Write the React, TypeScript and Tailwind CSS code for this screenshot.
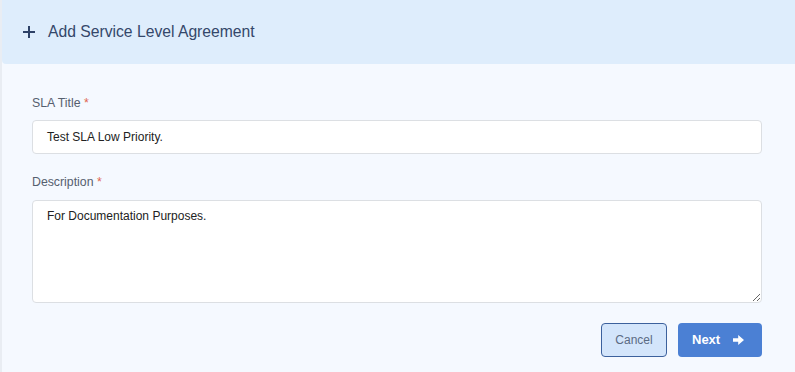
import React from "react";

export default function App() {
  const font = { fontFamily: "'Liberation Sans', Arial, sans-serif" };
  return (
    <div
      className="w-[795px] h-[372px] bg-[#f5f9ff] border-l-2 border-[#e9edf3] flex flex-col overflow-hidden"
      style={font}
    >
      <div className="h-[64px] shrink-0 bg-[#deedfc] rounded-bl-[4px] flex items-center pl-[20px]">
        <svg width="14" height="14" viewBox="0 0 14 14" className="mr-[12px]">
          <path d="M7 1v12M1 7h12" stroke="#2d4167" strokeWidth="2" />
        </svg>
        <span className="text-[15.7px] text-[#34476a]">Add Service Level Agreement</span>
      </div>
      <div className="flex flex-col pl-[30px] pr-[33px] pt-[31px]">
        <label className="text-[12.3px] text-[#55606f] leading-[16px]">
          SLA Title <span className="text-[#e0664f]">*</span>
        </label>
        <div className="mt-[9px] h-[34px] bg-white border border-[#dcdfe3] rounded-[4px] flex items-center px-[14px] text-[12px] text-[#222]">
          Test SLA Low Priority.
        </div>
        <label className="mt-[20px] text-[12.3px] text-[#55606f] leading-[16px]">
          Description <span className="text-[#e0664f]">*</span>
        </label>
        <textarea
          className="mt-[10px] h-[103px] bg-white border border-[#dcdfe3] rounded-[4px] px-[14px] pt-[6px] text-[12px] text-[#222] outline-none"
          defaultValue="For Documentation Purposes."
          style={font}
        />
        <div className="mt-[20px] flex justify-end gap-[11px]">
          <button
            className="w-[66px] h-[34px] bg-[#d3e5fb] border border-[#3c619d] rounded-[4px] text-[12px] text-[#5b6b84]"
            style={font}
          >
            Cancel
          </button>
          <button
            className="w-[84px] h-[34px] bg-[#4b80d4] rounded-[4px] text-[13px] text-white font-bold flex items-center pl-[14px]"
            style={font}
          >
            <span>Next</span>
            <svg width="11" height="10" viewBox="0 0 11 10" className="ml-[13px]">
              <path d="M0 3.2h5.2V0L11 5 5.2 10V6.8H0z" fill="#fff" />
            </svg>
          </button>
        </div>
      </div>
    </div>
  );
}
